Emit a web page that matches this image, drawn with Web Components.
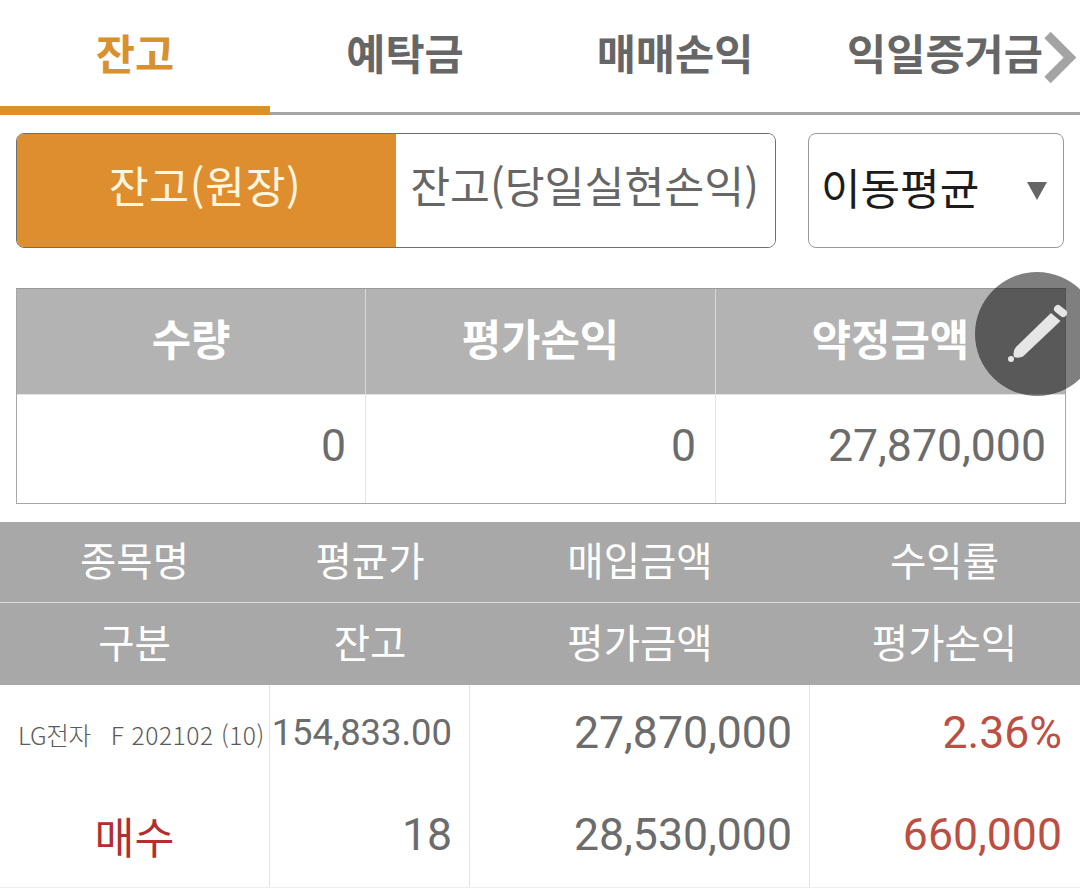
<!DOCTYPE html>
<html lang="ko"><head><meta charset="utf-8"><title>잔고</title>
<style>
html,body{margin:0;padding:0;background:#fff}
body{width:1080px;height:888px;overflow:hidden;font-family:"Noto Sans CJK KR","Noto Sans",sans-serif;color:#666}
</style></head><body>
<bal-page></bal-page>
<script>
function def(name, css, html){
  customElements.define(name, class extends HTMLElement{
    constructor(){super();const r=this.attachShadow({mode:'open'});r.innerHTML='<style>'+css+'</style>'+html;}
  });
}
def('tab-bar',`:host{display:flex;height:115px;position:relative;box-sizing:border-box;border-bottom:3px solid #a6a6a6}
 .more{position:absolute;left:1040px;top:28px;width:40px;height:60px}`,
 `<slot></slot><svg class="more" viewBox="0 0 40 60"><path d="M7.5 7 L30 29.5 L7.5 52" fill="none" stroke="#a4a4a4" stroke-width="9"/></svg>`);
def('tab-item',`:host{display:block;flex:0 0 270px;height:115px;box-sizing:border-box;text-align:center;font-size:42.6px;font-weight:700;line-height:104px;color:#666;white-space:nowrap}
 :host([active]){color:#d9902f;box-shadow:inset 0 -9px 0 #de8d2f}`,`<slot></slot>`);
def('filter-row',`:host{display:flex;gap:32px;padding:18px 16px 0;height:115px}`,`<slot></slot>`);
def('seg-group',`:host{display:flex;width:760px;height:115px;box-sizing:border-box;border:1px solid #6f6f6f;border-radius:8px;overflow:hidden}`,`<slot></slot>`);
def('seg-item',`:host{display:flex;align-items:center;justify-content:center;font-size:43.4px;line-height:1;color:#666;background:#fff;white-space:nowrap;flex:1;padding:0 2px 11px 0;box-sizing:border-box}
 :host([active]){flex:0 0 379px;background:#de8d2f;color:#fff6df;letter-spacing:.6px;padding:0 3px 11px 0}`,`<slot></slot>`);
def('sort-select',`:host{display:flex;align-items:center;justify-content:space-between;width:256px;height:115px;box-sizing:border-box;border:1px solid #999;border-radius:8px;padding:0 16px 10px 12px;font-size:43px;color:#1c1c1c;white-space:nowrap}
 svg{width:20px;height:18px;margin-top:10px}`,`<slot></slot><svg viewBox="0 0 20 18"><path d="M0 0H20L10 18Z" fill="#666"/></svg>`);
def('sum-table',`:host{display:block;margin:40px 14px 0 16px;width:1050px;box-sizing:border-box;border:1px solid #a6a6a6;border-top-color:#999;height:216px;position:relative}
 .g{display:grid;grid-template-columns:348px 350px 1fr;grid-template-rows:106px 108px;height:214px}`,`<div class="g"><slot></slot></div>`);
def('sum-head',`:host{display:flex;align-items:center;justify-content:center;background:#b3b3b3;color:#fff;font-size:42.8px;font-weight:700;padding-bottom:9px;box-sizing:border-box;border-left:1px solid #d8d8d8;border-bottom:1px solid #e4e4e4}
 :host([first]){border-left:0}`,`<slot></slot>`);
def('sum-cell',`:host{display:flex;align-items:center;justify-content:flex-end;padding:0 19px 6px 0;font:400 44.6px Roboto,sans-serif;color:#6c6c6c;box-sizing:border-box;border-left:1px solid #e4e4e4}
 :host([first]){border-left:0}`,`<slot></slot>`);
def('fab-pen',`:host{position:absolute;left:975px;top:272px;width:124px;height:124px;border-radius:50%;background:rgba(0,0,0,.5);display:block}
 svg{position:absolute;left:0;top:0;width:124px;height:124px}`,
 `<svg viewBox="0 0 124 124"><g transform="translate(-975 -272)" fill="#e6e6e6"><path d="M1051 313 L1060.500 321 L1023 356.500 Q1019 358.500 1014 357 Q1012.500 351 1016 347Z"/><path d="M1058 309 L1063 313" stroke="#e6e6e6" stroke-width="8" stroke-linecap="round"/><circle cx="1011" cy="359" r="3"/></g></svg>`);
def('pos-head',`:host{display:grid;grid-template-columns:269px 200px 340px 271px;margin-top:18px;background:#a8a8a8;color:#fff;font-size:39.5px;grid-template-rows:80px 83px;height:163px}`,`<slot></slot>`);
def('pos-h',`:host{display:flex;align-items:center;justify-content:center;padding-bottom:8px;box-sizing:border-box;white-space:nowrap}
 :host([second]){border-top:1px solid #dcdcdc}
 :host([shift]){padding-left:2px}`,`<slot></slot>`);
def('pos-grid',`:host{display:grid;grid-template-columns:269px 200px 340px 271px;grid-template-rows:101px 101px;height:203px;box-sizing:border-box;border-bottom:1px solid #eee}`,`<slot></slot>`);
def('pos-c',`:host{display:flex;align-items:center;justify-content:flex-end;padding:0 17px 6px 0;font:400 44.6px Roboto,"Noto Sans CJK KR",sans-serif;color:#6c6c6c;box-sizing:border-box;white-space:nowrap;border-left:1px solid #e4e4e4}
 :host([low]){padding-top:2px}
 :host([first]){border-left:0;justify-content:center;padding:0 0 4px}
 :host([name]){font:300 24.6px "Noto Sans CJK KR",sans-serif;color:#5a5a5a;letter-spacing:-.3px;justify-content:flex-start;padding:0 0 4px 18px}
 :host([buy]){font:400 43.4px "Noto Sans CJK KR",sans-serif;color:#b03030}
 :host([up]){color:#bb4f43;padding-right:18px}
 :host([avg]){font-size:36.4px;padding-right:17px}
 ::slotted(span){letter-spacing:.5px}`,`<slot></slot>`);
def('bal-page',`:host{display:block;position:relative;width:1080px;height:888px}`,
`<tab-bar><tab-item active>잔고</tab-item><tab-item>예탁금</tab-item><tab-item>매매손익</tab-item><tab-item>익일증거금</tab-item></tab-bar>
<filter-row><seg-group><seg-item active>잔고(원장)</seg-item><seg-item>잔고(당일실현손익)</seg-item></seg-group><sort-select>이동평균</sort-select></filter-row>
<sum-table><sum-head first>수량</sum-head><sum-head>평가손익</sum-head><sum-head>약정금액</sum-head><sum-cell first>0</sum-cell><sum-cell>0</sum-cell><sum-cell>27,870,000</sum-cell></sum-table>
<pos-head><pos-h>종목명</pos-h><pos-h shift>평균가</pos-h><pos-h shift>매입금액</pos-h><pos-h>수익률</pos-h><pos-h second>구분</pos-h><pos-h second shift>잔고</pos-h><pos-h second shift>평가금액</pos-h><pos-h second>평가손익</pos-h></pos-head>
<pos-grid><pos-c first name>LG전자&nbsp;&nbsp;&nbsp;<span>F 202102 (10)</span></pos-c><pos-c avg>154,833.00</pos-c><pos-c>27,870,000</pos-c><pos-c up>2.36%</pos-c><pos-c first buy>매수</pos-c><pos-c low>18</pos-c><pos-c low>28,530,000</pos-c><pos-c up low>660,000</pos-c></pos-grid>
<fab-pen></fab-pen>`);
</script></body></html>
